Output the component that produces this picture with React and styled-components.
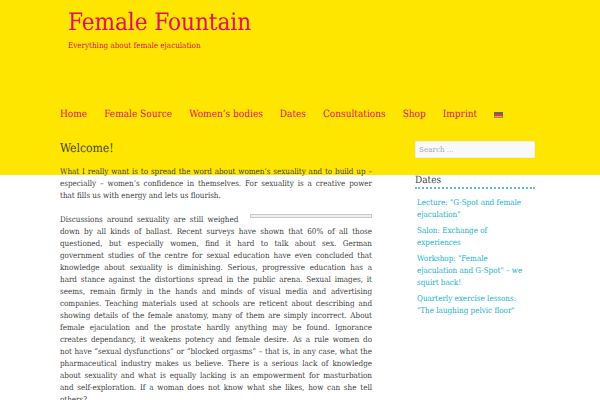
import React from 'react';
import styled, { createGlobalStyle } from 'styled-components';

const GlobalStyle = createGlobalStyle`
  * {
    box-sizing: border-box;
  }
  body {
    margin: 0;
    background: #fff linear-gradient(#ffe600, #ffe600) no-repeat 0 0 / 100% 175px;
    color: #444;
    font-family: "DejaVu Serif Condensed", "DejaVu Serif", serif;
    font-size: 8px;
    line-height: 12px;
    text-rendering: geometricPrecision;
  }
`;

const Page = styled.div`
  width: 80%;
  margin: 0 auto;
`;

const Header = styled.header`
  padding: 6px 8px 0;
  color: #e0115f;
`;

const SiteTitle = styled.h1`
  margin: 0;
  font-size: 24px;
  line-height: 32px;
  font-weight: normal;
`;

const Tagline = styled.p`
  margin: 2px 0 0;
`;

const Nav = styled.nav`
  display: flex;
  align-items: center;
  gap: 17px;
  margin-top: 57px;
`;

const NavLink = styled.a`
  color: #e0115f;
  font-size: 10px;
  text-decoration: none;
  white-space: nowrap;
`;

const Flag = styled.svg`
  display: block;
  width: 9px;
  height: 6px;
`;

const Columns = styled.div`
  display: flex;
  justify-content: space-between;
  margin-top: 20px;
  padding-right: 5px;
`;

const Article = styled.main`
  flex: 0 0 312px;
`;

const PageTitle = styled.h2`
  margin: 0 0 11px;
  font-size: 12px;
  line-height: 14px;
  font-weight: normal;
`;

const Paragraph = styled.p`
  margin: 0 0 12px;
`;

const Line = styled.span`
  display: block;
  text-align: justify;
  text-align-last: justify;

  &:last-child {
    text-align-last: left;
  }
`;

const ImageFrame = styled.span`
  float: right;
  width: 39%;
  height: 4px;
  margin: 0 0 4px 12px;
  border: 1px solid #ccc;
  background: #eee;
`;

const Sidebar = styled.aside`
  flex: 0 0 120px;
`;

const SearchInput = styled.input`
  display: block;
  width: 100%;
  height: 17px;
  padding: 0 3px;
  border: 1px solid #eee;
  border-radius: 1px;
  background: #f9f9f9;
  color: #444;
  font-family: inherit;
  font-size: 8px;

  &::placeholder {
    color: #aaa;
  }
`;

const WidgetTitle = styled.h3`
  margin: 16px 0 0;
  border-bottom: 2px dotted #5bc0d0;
  font-size: 10px;
  line-height: 13px;
  font-weight: normal;
`;

const DateList = styled.ul`
  display: flex;
  flex-direction: column;
  gap: 4px;
  margin: 8px 0 0;
  padding: 0 8px 0 2px;
  list-style: none;
`;

const DateLink = styled.a`
  color: #21b3cb;
  text-decoration: none;
`;

const menu = ['Home', 'Female Source', 'Women’s bodies', 'Dates', 'Consultations', 'Shop', 'Imprint'];

const intro = [
  'What I really want is to spread the word about women’s sexuality and to build up –',
  'especially – women’s confidence in themselves. For sexuality is a creative power',
  'that fills us with energy and lets us flourish.',
];

const discussion = [
  'Discussions around sexuality are still weighed',
  'down by all kinds of ballast. Recent surveys have shown that 60% of all those',
  'questioned, but especially women, find it hard to talk about sex. German',
  'government studies of the centre for sexual education have even concluded that',
  'knowledge about sexuality is diminishing. Serious, progressive education has a',
  'hard stance against the distortions spread in the public arena. Sexual images, it',
  'seems, remain firmly in the hands and minds of visual media and advertising',
  'companies. Teaching materials used at schools are reticent about describing and',
  'showing details of the female anatomy, many of them are simply incorrect. About',
  'female ejaculation and the prostate hardly anything may be found. Ignorance',
  'creates dependancy, it weakens potency and female desire. As a rule women do',
  'not have “sexual dysfunctions” or “blocked orgasms” – that is, in any case, what the',
  'pharmaceutical industry makes us believe. There is a serious lack of knowledge',
  'about sexuality and what is equally lacking is an empowerment for masturbation',
  'and self-exploration. If a woman does not know what she likes, how can she tell',
  'others?',
];

const dates = [
  'Lecture: "G-Spot and female ejaculation"',
  'Salon: Exchange of experiences',
  'Workshop: "Female ejaculation and G-Spot" – we squirt back!',
  'Quarterly exercise lessons: "The laughing pelvic floor"',
];

const GermanFlag = () => (
  <Flag viewBox="0 0 9 6" aria-hidden="true">
    <rect width="9" height="2" fill="#6b6455" />
    <rect y="2" width="9" height="2" fill="#d8403f" />
    <rect y="4" width="9" height="2" fill="#e0a050" />
    <rect x="0.5" y="0.5" width="8" height="5" fill="none" stroke="#776a70" strokeOpacity="0.5" />
  </Flag>
);

const JustifiedText = ({ lines }) => (
  <Paragraph>
    {lines.map((line) => (
      <Line key={line}>{line} </Line>
    ))}
  </Paragraph>
);

const App = () => {
  return (
    <>
      <GlobalStyle />
      <Page>
        <Header>
          <SiteTitle>Female Fountain</SiteTitle>
          <Tagline>Everything about female ejaculation</Tagline>
        </Header>
        <Nav>
          {menu.map((item) => (
            <NavLink href="#" key={item}>{item}</NavLink>
          ))}
          <NavLink href="#" aria-label="Deutsch">
            <GermanFlag />
          </NavLink>
        </Nav>
        <Columns>
          <Article>
            <PageTitle>Welcome!</PageTitle>
            <JustifiedText lines={intro} />
            <ImageFrame />
            <JustifiedText lines={discussion} />
          </Article>
          <Sidebar>
            <SearchInput type="search" aria-label="Search" placeholder="Search ..." />
            <WidgetTitle>Dates</WidgetTitle>
            <DateList>
              {dates.map((date) => (
                <li key={date}>
                  <DateLink href="#">{date}</DateLink>
                </li>
              ))}
            </DateList>
          </Sidebar>
        </Columns>
      </Page>
    </>
  );
};

export default App;
